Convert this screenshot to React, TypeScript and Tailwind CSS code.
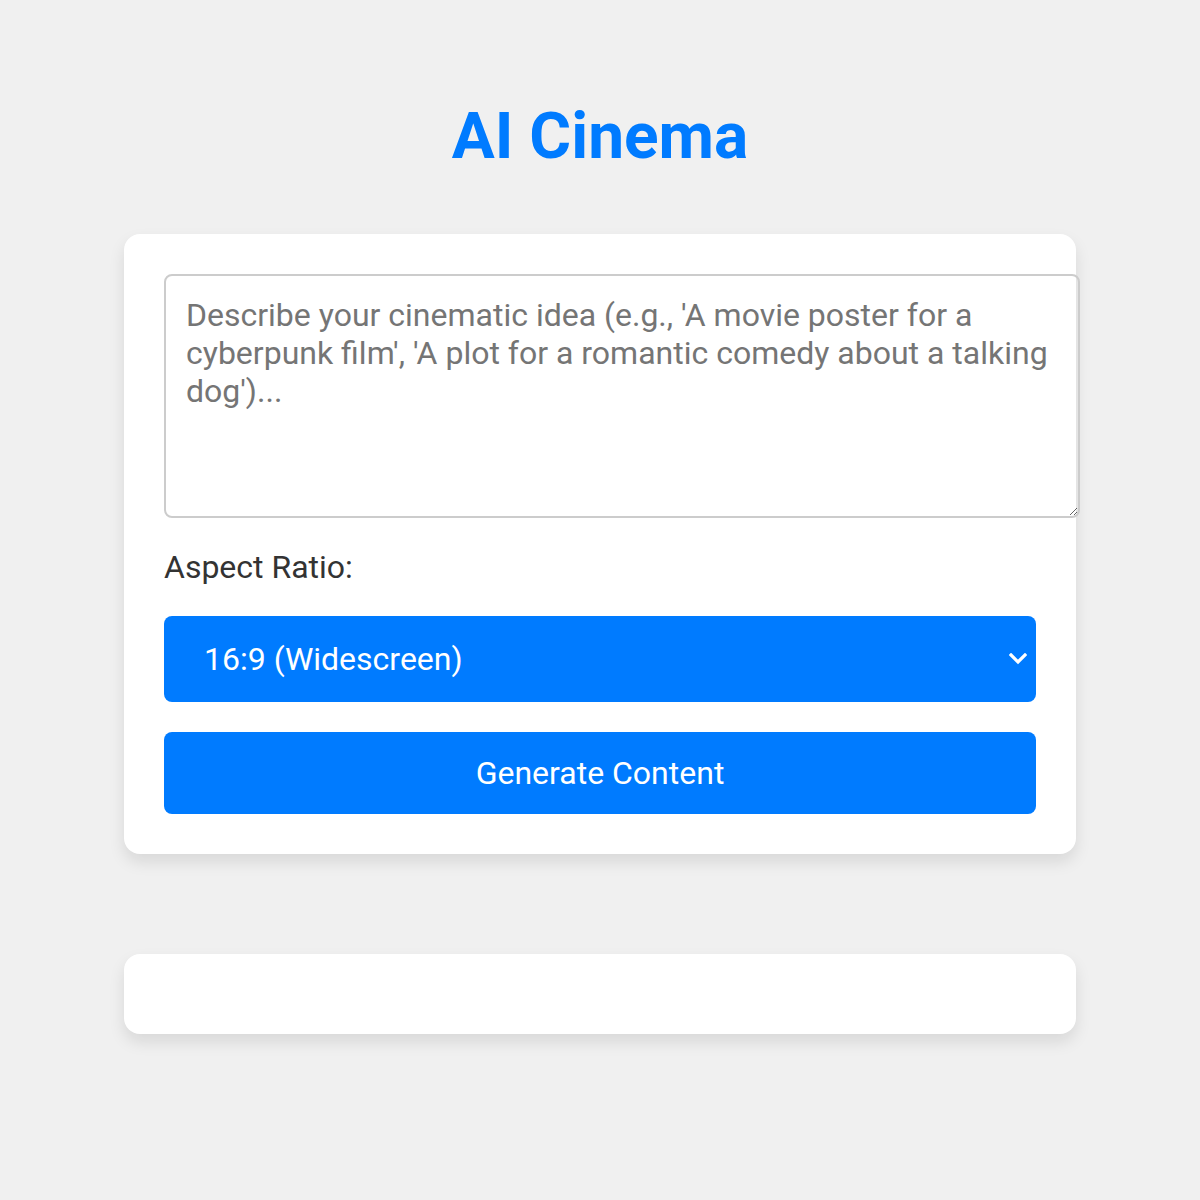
import React, { useState } from "react";

const App: React.FC = () => {
  const [prompt, setPrompt] = useState<string>("");
  const [ratio, setRatio] = useState<string>("16:9");

  return (
    <div className="min-h-[1200px] bg-[#f0f0f0] font-['Roboto',sans-serif] pt-[99px]">
      <h1 className="text-center text-[64px] font-bold leading-[75px] text-[#007bff]">AI Cinema</h1>

      <div className="mx-auto mt-[60px] w-[952px] rounded-[16px] bg-white p-[40px] shadow-[0_8px_16px_rgba(0,0,0,0.1)]">
        <textarea
          value={prompt}
          onChange={(e) => setPrompt(e.target.value)}
          placeholder="Describe your cinematic idea (e.g., 'A movie poster for a cyberpunk film', 'A plot for a romantic comedy about a talking dog')..."
          className="block box-content h-[200px] w-full rounded-[8px] border-2 border-[#cccccc] p-[20px] text-[32px] leading-[38px] text-[#333] placeholder:text-[#757575] outline-none"
        />

        <label className="mt-[30px] block text-[32px] leading-[38px] text-[#333]">Aspect Ratio:</label>

        {/* select with custom chevron */}
        <div className="relative mt-[30px]">
          <select
            value={ratio}
            onChange={(e) => setRatio(e.target.value)}
            className="block h-[86px] w-full appearance-none rounded-[8px] bg-[#007bff] pl-[40px] text-[32px] text-white outline-none"
          >
            <option value="16:9">16:9 (Widescreen)</option>
            <option value="4:3">4:3 (Standard)</option>
            <option value="1:1">1:1 (Square)</option>
            <option value="9:16">9:16 (Vertical)</option>
          </select>
          <svg
            className="pointer-events-none absolute right-[9px] top-1/2 -translate-y-1/2"
            width="18"
            height="12"
            viewBox="0 0 18 12"
            fill="none"
          >
            <polyline points="2,2 9,9 16,2" stroke="white" strokeWidth="3.2" strokeLinecap="square" />
          </svg>
        </div>

        <button className="mt-[30px] block h-[82px] w-full rounded-[8px] bg-[#007bff] text-[32px] text-white">
          Generate Content
        </button>
      </div>

      <div className="mx-auto mt-[100px] h-[80px] w-[952px] rounded-[16px] bg-white shadow-[0_8px_16px_rgba(0,0,0,0.1)]" />
    </div>
  );
};

export default App;
